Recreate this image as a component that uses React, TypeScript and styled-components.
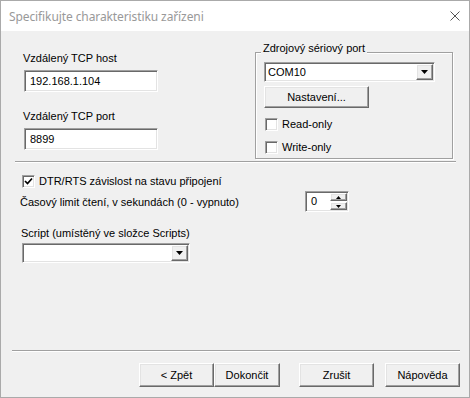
import React from 'react';
import styled, { createGlobalStyle, css } from 'styled-components';

const GlobalStyle = createGlobalStyle`
  html, body { margin: 0; padding: 0; background: #ffffff; }
  body {
    font-family: 'Liberation Sans', Arial, sans-serif;
    font-size: 11px;
    color: #000000;
  }
  * { box-sizing: border-box; }
`;

/* klasický 3D rámeček - vmáčknutý (pole) a vystouplý (tlačítko) */
const sunken = css`
  background: #ffffff;
  border: 1px solid;
  border-color: #a0a0a0 #ffffff #ffffff #a0a0a0;
  box-shadow: inset 1px 1px 0 #696969, inset -1px -1px 0 #e3e3e3;
`;

const raised = css`
  background: #f0f0f0;
  border: 1px solid;
  border-color: #ffffff #696969 #696969 #ffffff;
  box-shadow: inset -1px -1px 0 #a0a0a0, inset 1px 1px 0 #e3e3e3;
`;

const Window = styled.div`
  width: 470px;
  height: 398px;
  border: 1px solid #aaaaaa;
  background: #f0f0f0;
  display: flex;
  flex-direction: column;
`;

const TitleBar = styled.div`
  height: 30px;
  flex-shrink: 0;
  background: #ffffff;
  display: flex;
  align-items: center;
  justify-content: space-between;
  padding: 0 9px 0 8px;
`;

const Title = styled.span`
  font-family: 'Noto Sans', 'Open Sans', sans-serif;
  font-size: 12px;
  color: #999999;
  letter-spacing: -0.1px;
`;

const CloseIcon = styled.svg`
  display: block;
`;

const Body = styled.div`
  flex: 1;
  display: flex;
  flex-direction: column;
`;

const TopSection = styled.div`
  display: flex;
  align-items: flex-start;
  justify-content: space-between;
  padding: 0 16px 0 22px;
`;

const LeftColumn = styled.div`
  display: flex;
  flex-direction: column;
  padding-top: 21px;
`;

const Label = styled.div<{ $gap?: number }>`
  line-height: 13px;
  margin-bottom: ${(p) => p.$gap ?? 5}px;
  white-space: nowrap;
`;

const TextField = styled.input<{ $after?: number }>`
  ${sunken};
  width: 134px;
  height: 22px;
  margin: 0 0 ${(p) => p.$after ?? 0}px 1px;
  padding: 0 0 0 5px;
  font: inherit;
  line-height: 13px;
  color: #000000;
  outline: none;
`;

const GroupBox = styled.div`
  position: relative;
  margin-top: 21px;
  width: 198px;
  height: 107px;
  border: 1px solid #a0a0a0;
  box-shadow: inset 1px 1px 0 #ffffff, 1px 1px 0 #ffffff;
  padding: 9px 0 0 8px;
  display: flex;
  flex-direction: column;
  align-items: flex-start;
`;

const Legend = styled.span`
  position: absolute;
  top: -11px;
  left: 5px;
  padding: 0 2px;
  line-height: 13px;
  background: #f0f0f0;
  white-space: nowrap;
`;

const Combo = styled.div<{ $width: number }>`
  ${sunken};
  width: ${(p) => p.$width}px;
  height: 20px;
  display: flex;
  align-items: center;
  padding: 1px 1px 1px 3px;
  line-height: 13px;
`;

const ComboText = styled.span`
  flex: 1;
`;

const DropButton = styled.div`
  ${raised};
  width: 17px;
  height: 100%;
  display: flex;
  align-items: center;
  justify-content: center;
`;

const PushButton = styled.button<{ $width: number; $height?: number; $gap?: number }>`
  ${raised};
  width: ${(p) => p.$width}px;
  height: ${(p) => p.$height ?? 22}px;
  margin-left: ${(p) => p.$gap ?? 0}px;
  padding: 0;
  font: inherit;
  color: #000000;
  line-height: 13px;
  text-align: center;
`;

const SettingsButton = styled(PushButton)`
  margin-top: 4px;
`;

const CheckRow = styled.label<{ $top: number; $indent?: number }>`
  display: flex;
  align-items: center;
  height: 13px;
  margin-top: ${(p) => p.$top}px;
  margin-left: ${(p) => p.$indent ?? 1}px;
  line-height: 13px;
  white-space: nowrap;
`;

const CheckBox = styled.span`
  ${sunken};
  width: 13px;
  height: 13px;
  margin-right: 4px;
  display: flex;
  align-items: center;
  justify-content: center;
`;

const Separator = styled.div<{ $left: number; $right: number }>`
  height: 2px;
  margin: 0 ${(p) => p.$right}px 0 ${(p) => p.$left}px;
  border-top: 1px solid #a0a0a0;
  border-bottom: 1px solid #ffffff;
`;

const TopSeparator = styled(Separator)`
  margin-top: 2px;
`;

const Options = styled.div`
  display: flex;
  flex-direction: column;
  padding: 12px 0 0 21px;
`;

const TimeoutRow = styled.div`
  display: flex;
  align-items: center;
  margin-top: 3px;
  height: 21px;
`;

const TimeoutLabel = styled.span`
  width: 285px;
  margin-left: -2px;
  padding-top: 1px;
  line-height: 13px;
  white-space: nowrap;
`;

const SpinBox = styled.div`
  ${sunken};
  width: 44px;
  height: 21px;
  display: flex;
  align-items: stretch;
  padding: 1px;
`;

const SpinValue = styled.span`
  flex: 1;
  padding-left: 4px;
  line-height: 17px;
`;

const SpinButtons = styled.div`
  width: 17px;
  display: flex;
  flex-direction: column;
  gap: 1px;
`;

const SpinButton = styled.div`
  ${raised};
  flex: 1;
  display: flex;
  align-items: center;
  justify-content: center;
`;

const ScriptLabel = styled.div`
  margin: 15px 0 3px -1px;
  line-height: 13px;
`;

const Spacer = styled.div`
  flex: 1;
`;

const ButtonBar = styled.div`
  display: flex;
  justify-content: flex-end;
  padding: 11px 9px 10px 0;
`;

const Arrow = ({ w, h, up }: { w: number; h: number; up?: boolean }) => (
  <svg width={w} height={h} viewBox={`0 0 ${w} ${h}`}>
    <polygon points={up ? `0,${h} ${w},${h} ${w / 2},0` : `0,0 ${w},0 ${w / 2},${h}`} fill="#000" />
  </svg>
);

const Check = ({ checked, label, top, indent }: { checked?: boolean; label: string; top: number; indent?: number }) => (
  <CheckRow $top={top} $indent={indent}>
    <CheckBox>
      {checked && (
        <svg width="9" height="9" viewBox="0 0 9 9">
          <polyline points="1,4 3.5,6.5 8,1.5" fill="none" stroke="#000" strokeWidth="1.7" />
        </svg>
      )}
    </CheckBox>
    {label}
  </CheckRow>
);

export default function App() {
  return (
    <>
      <GlobalStyle />
      <Window>
        <TitleBar>
          <Title>Specifikujte charakteristiku zařízeni</Title>
          <CloseIcon width="10" height="10" viewBox="0 0 10 10">
            <path d="M0.5 0.5 L9.5 9.5 M9.5 0.5 L0.5 9.5" stroke="#555" strokeWidth="1" />
          </CloseIcon>
        </TitleBar>
        <Body>
          <TopSection>
            <LeftColumn>
              <Label>Vzdálený TCP host</Label>
              <TextField readOnly value="192.168.1.104" $after={18} />
              <Label>Vzdálený TCP port</Label>
              <TextField readOnly value="8899" />
            </LeftColumn>
            <GroupBox>
              <Legend>Zdrojový sériový port</Legend>
              <Combo $width={171}>
                <ComboText>COM10</ComboText>
                <DropButton>
                  <Arrow w={7} h={4} />
                </DropButton>
              </Combo>
              <SettingsButton $width={105}>Nastavení...</SettingsButton>
              <Check label="Read-only" top={10} />
              <Check label="Write-only" top={10} />
            </GroupBox>
          </TopSection>
          <TopSeparator $left={14} $right={13} />
          <Options>
            <Check checked label="DTR/RTS závislost na stavu připojení" top={0} indent={0} />
            <TimeoutRow>
              <TimeoutLabel>Časový limit čtení, v sekundách (0 - vypnuto)</TimeoutLabel>
              <SpinBox>
                <SpinValue>0</SpinValue>
                <SpinButtons>
                  <SpinButton>
                    <Arrow w={5} h={3} up />
                  </SpinButton>
                  <SpinButton>
                    <Arrow w={5} h={3} />
                  </SpinButton>
                </SpinButtons>
              </SpinBox>
            </TimeoutRow>
            <ScriptLabel>Script (umístěný ve složce Scripts)</ScriptLabel>
            <Combo $width={168}>
              <ComboText />
              <DropButton>
                <Arrow w={7} h={4} />
              </DropButton>
            </Combo>
          </Options>
          <Spacer />
          <Separator $left={11} $right={9} />
          <ButtonBar>
            <PushButton $width={75} $height={24}>&lt; Zpět</PushButton>
            <PushButton $width={66} $height={24}>Dokončit</PushButton>
            <PushButton $width={75} $height={24} $gap={19}>Zrušit</PushButton>
            <PushButton $width={75} $height={24} $gap={11}>Nápověda</PushButton>
          </ButtonBar>
        </Body>
      </Window>
    </>
  );
}
